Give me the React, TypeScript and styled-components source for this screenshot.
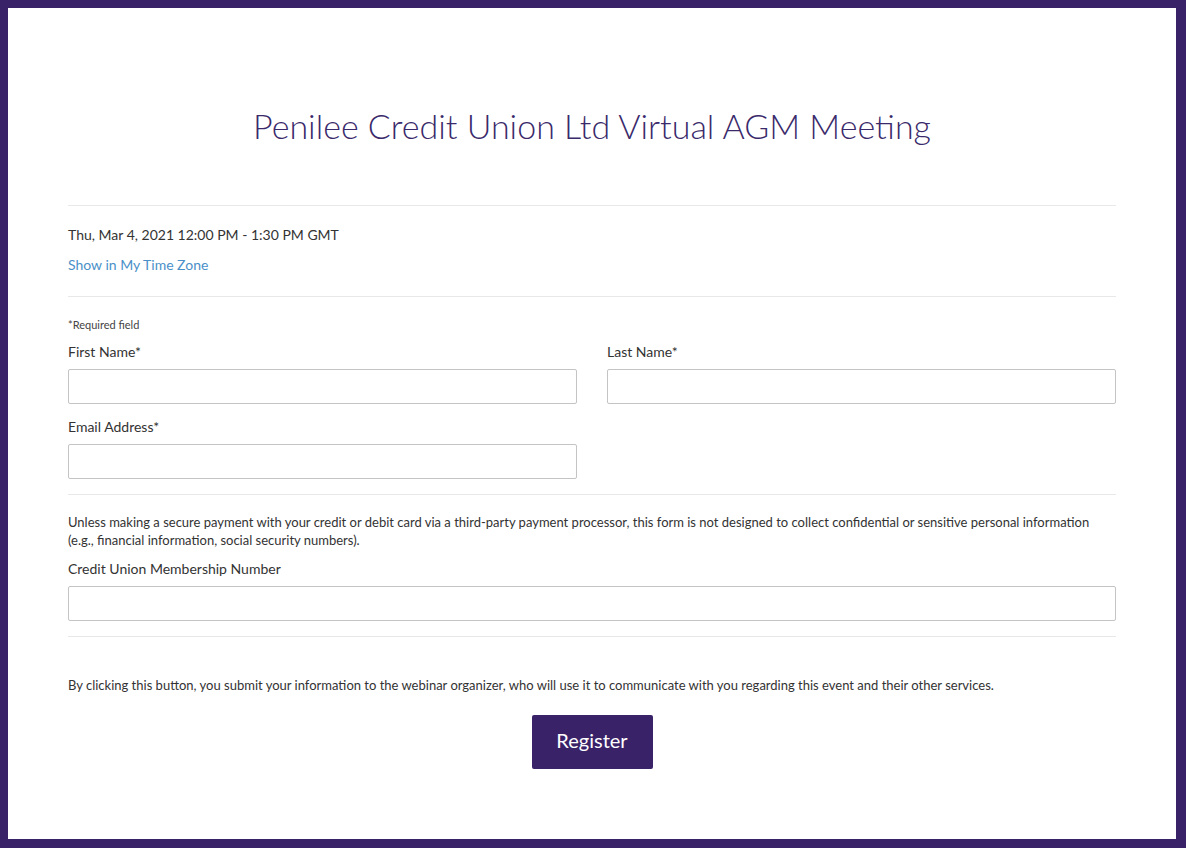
import React from 'react';
import styled, { createGlobalStyle } from 'styled-components';

const GlobalStyle = createGlobalStyle`
  html, body {
    margin: 0;
    padding: 0;
    background: #3a2269;
  }
  body {
    font-family: Lato, 'Open Sans', 'Liberation Sans', sans-serif;
    color: #333;
  }
  * {
    box-sizing: border-box;
  }
`;

const Frame = styled.div`
  padding: 8px 10px 9px 8px;
  height: 848px;
`;

const Card = styled.main`
  background: #fff;
  height: 100%;
  padding: 0 60px;
`;

const Header = styled.header`
  padding: 96px 0 57px;
  text-align: center;
`;

const Title = styled.h1`
  margin: 0;
  font-weight: 300;
  font-size: 34px;
  line-height: 44px;
  color: #3a2a6b;
`;

const Divider = styled.hr`
  margin: 0;
  border: 0;
  border-top: 1px solid #e8e8e8;
`;

const Section = styled.section<{ $top: number; $bottom: number }>`
  padding: ${(p) => p.$top}px 0 ${(p) => p.$bottom}px;
`;

const DateText = styled.div`
  font-size: 14px;
  line-height: 20px;
  color: #333;
`;

const ZoneLink = styled.a`
  display: block;
  margin-top: 10px;
  font-size: 14px;
  line-height: 20px;
  color: #4a90c8;
  text-decoration: none;
`;

const Required = styled.div`
  font-size: 11px;
  line-height: 16px;
  color: #444;
  margin-bottom: 9px;
`;

const Grid = styled.div`
  display: grid;
  grid-template-columns: 1fr 1fr;
  column-gap: 30px;
  row-gap: 13px;
`;

const Field = styled.div`
  display: flex;
  flex-direction: column;
`;

const Label = styled.label`
  font-size: 14px;
  line-height: 20px;
  color: #333;
  margin-bottom: 7px;
`;

const Input = styled.input`
  height: 35px;
  border: 1px solid #c4c4c4;
  border-radius: 2px;
  padding: 0 10px;
  font: inherit;
  font-size: 14px;
  outline: none;
  background: #fff;
`;

const Note = styled.p<{ $gap?: number }>`
  margin: 0 0 ${(p) => p.$gap ?? 0}px;
  font-size: 13px;
  line-height: 18px;
  color: #333;
`;

const Actions = styled.div`
  display: flex;
  justify-content: center;
  margin-top: 21px;
`;

const Button = styled.button`
  width: 121px;
  height: 54px;
  border: 0;
  border-radius: 2px;
  padding: 0 0 4px;
  background: #3a2269;
  color: #fff;
  font-family: inherit;
  font-size: 20px;
  cursor: pointer;
`;

const App: React.FC = () => {
  return (
    <>
      <GlobalStyle />
      <Frame>
        <Card>
          <Header>
            <Title>Penilee Credit Union Ltd Virtual AGM Meeting</Title>
          </Header>
          <Divider />
          <Section $top={19} $bottom={21}>
            <DateText>Thu, Mar 4, 2021 12:00 PM - 1:30 PM GMT</DateText>
            <ZoneLink href="#">Show in My Time Zone</ZoneLink>
          </Section>
          <Divider />
          <Section $top={20} $bottom={15}>
            <Required>*Required field</Required>
            <Grid>
              <Field>
                <Label>First Name*</Label>
                <Input type="text" />
              </Field>
              <Field>
                <Label>Last Name*</Label>
                <Input type="text" />
              </Field>
              <Field>
                <Label>Email Address*</Label>
                <Input type="email" />
              </Field>
            </Grid>
          </Section>
          <Divider />
          <Section $top={18} $bottom={15}>
            <Note $gap={10}>
              Unless making a secure payment with your credit or debit card via a third-party payment
              processor, this form is not designed to collect confidential or sensitive personal
              information (e.g., financial information, social security numbers).
            </Note>
            <Field>
              <Label>Credit Union Membership Number</Label>
              <Input type="text" />
            </Field>
          </Section>
          <Divider />
          <Section $top={39} $bottom={0}>
            <Note>
              By clicking this button, you submit your information to the webinar organizer, who will
              use it to communicate with you regarding this event and their other services.
            </Note>
            <Actions>
              <Button type="button">Register</Button>
            </Actions>
          </Section>
        </Card>
      </Frame>
    </>
  );
};

export default App;
